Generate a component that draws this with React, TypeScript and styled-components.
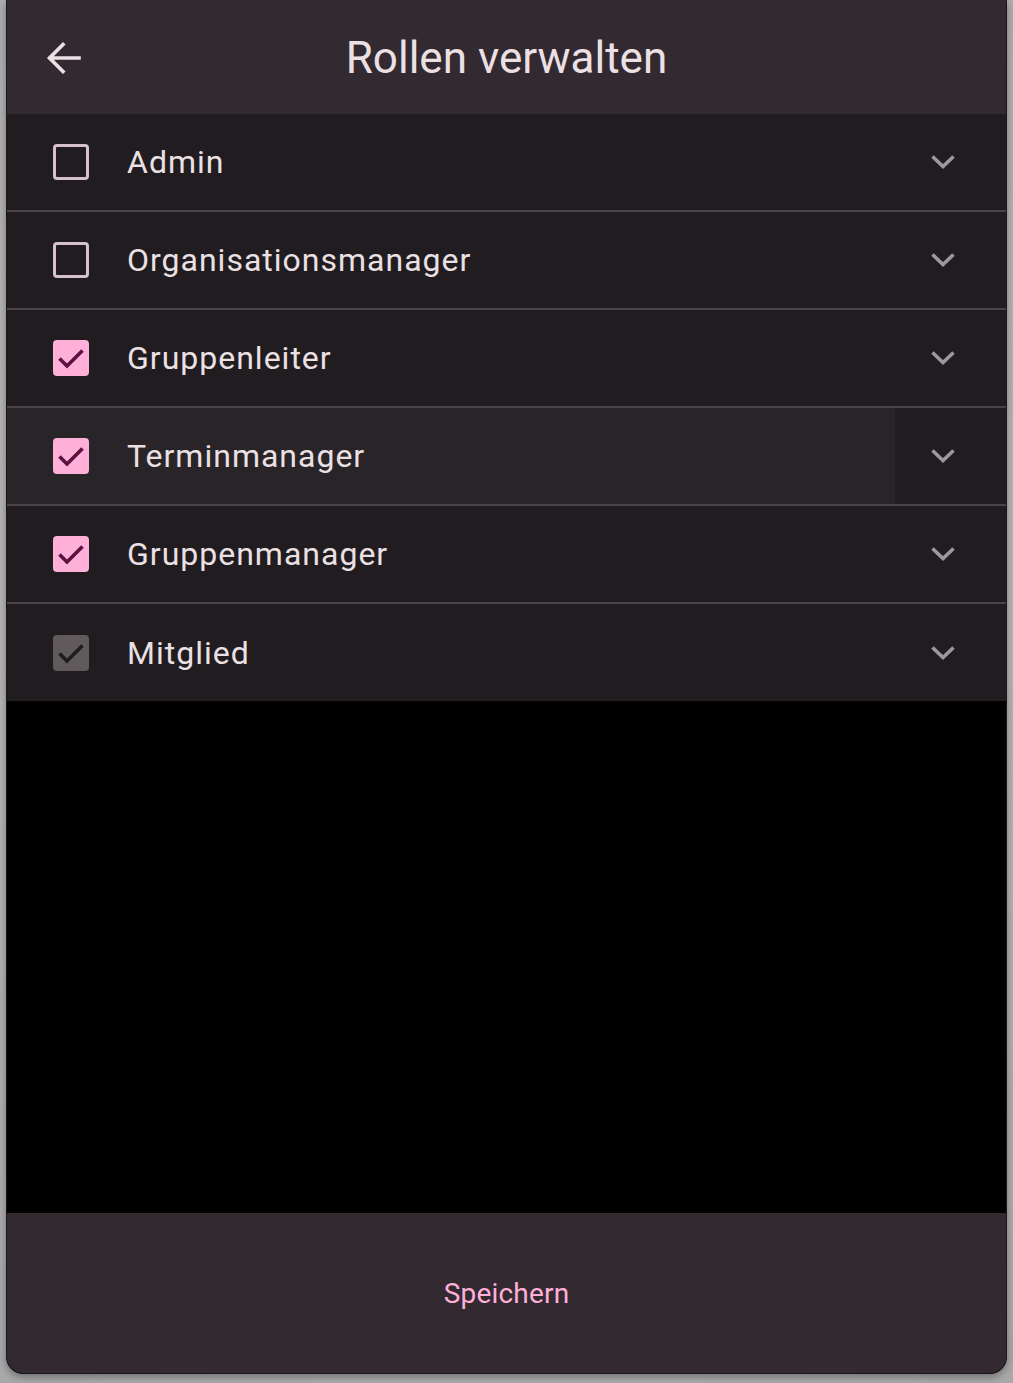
import React, {FC, useState} from 'react';
import styled, {createGlobalStyle} from 'styled-components';

const GlobalStyle = createGlobalStyle`
  html, body {
    margin: 0;
    padding: 0;
    background: radial-gradient(circle at 50% 40%, #c4c4c4, #a9a9a9);
    font-family: Roboto, "Noto Sans", sans-serif;
  }
`

type Role = {
    id: number
    name: string
    checked: boolean
    locked?: boolean
}

const roles: Role[] = [
    {id: 1, name: 'Admin', checked: false},
    {id: 2, name: 'Organisationsmanager', checked: false},
    {id: 3, name: 'Gruppenleiter', checked: true},
    {id: 4, name: 'Terminmanager', checked: true},
    {id: 5, name: 'Gruppenmanager', checked: true},
    {id: 6, name: 'Mitglied', checked: true, locked: true},
]

const Page = styled.div`
  padding: 0 6px 9px 6px;
`

const Window = styled.div`
  height: 1372px;
  display: flex;
  flex-direction: column;
  background: #000;
  border: 1px solid #1b1719;
  border-top: 1px solid #2f3131;
  border-radius: 0 0 17px 17px;
  overflow: hidden;
  box-shadow: 0 3px 8px rgba(0, 0, 0, 0.35);
`

const Header = styled.header`
  height: 113px;
  flex-shrink: 0;
  display: grid;
  grid-template-columns: 112px 1fr 112px;
  align-items: center;
  background: #322a30;
`

const BackButton = styled.button`
  width: 56px;
  height: 56px;
  margin-left: 29px;
  display: flex;
  align-items: center;
  justify-content: center;
  background: none;
  border: none;
  padding: 0;
  cursor: pointer;
`

const Title = styled.h1`
  margin: 0;
  text-align: center;
  color: #ece0e5;
  font-size: 44px;
  font-weight: 400;
  line-height: 1;
`

const List = styled.div`
  display: flex;
  flex-direction: column;
  background: #201c1f;
`

const Row = styled.div<{ $last?: boolean }>`
  height: ${p => p.$last ? '97px' : '96px'};
  display: flex;
  border-bottom: ${p => p.$last ? 'none' : '2px solid #4a4246'};
`

const RowMain = styled.label<{ $hover?: boolean }>`
  flex: 1;
  display: flex;
  align-items: center;
  padding-left: 46px;
  background: ${p => p.$hover ? '#282427' : 'transparent'};
  cursor: pointer;
`

const Box = styled.span<{ $checked: boolean, $locked?: boolean }>`
  width: 36px;
  height: 36px;
  box-sizing: border-box;
  border-radius: 4px;
  display: flex;
  align-items: center;
  justify-content: center;
  border: ${p => p.$checked ? 'none' : '3px solid #d6c2cb'};
  background: ${p => !p.$checked ? 'transparent' : p.$locked ? '#605a5d' : '#ffb0d9'};
`

const Label = styled.span`
  margin-left: 38px;
  color: #ebe0e4;
  font-size: 32px;
  letter-spacing: 1px;
`

const Expand = styled.button`
  width: 111px;
  display: flex;
  align-items: center;
  justify-content: center;
  background: none;
  border: none;
  padding: 0 16px 0 0;
  cursor: pointer;
`

const Empty = styled.div`
  flex: 1;
  background: #000;
`

const Footer = styled.footer`
  height: 160px;
  flex-shrink: 0;
  display: flex;
  align-items: center;
  justify-content: center;
  background: #322a30;
`

const SaveButton = styled.button`
  background: none;
  border: none;
  padding: 10px 20px;
  color: #ffb0d9;
  font-family: Roboto, sans-serif;
  font-size: 28px;
  letter-spacing: 0.2px;
  cursor: pointer;
`

const ArrowLeft: FC = () => (
    <svg width="36" height="36" viewBox="0 0 36 36" fill="none">
        <path d="M33 18H4M17 4.5L3.5 18L17 31.5" stroke="#ece0e5" strokeWidth="3.6" strokeLinecap="square"/>
    </svg>
)

const Chevron: FC = () => (
    <svg width="26" height="16" viewBox="0 0 26 16" fill="none">
        <path d="M2.5 2.5L13 12.5L23.5 2.5" stroke="#9d989b" strokeWidth="3.6"/>
    </svg>
)

const Check: FC<{ color: string }> = ({color}) => (
    <svg width="36" height="36" viewBox="0 0 36 36" fill="none">
        <path d="M6.5 18.5L14 26L29.5 10.5" stroke={color} strokeWidth="3.6"/>
    </svg>
)

const App: FC = () => {
    const [list, setList] = useState(roles)

    const toggle = (id: number) => {
        setList(list.map(r => r.id === id && !r.locked ? {...r, checked: !r.checked} : r))
    }

    return (
        <Page>
            <GlobalStyle/>
            <Window>
                <Header>
                    <BackButton aria-label="Zurück"><ArrowLeft/></BackButton>
                    <Title>Rollen verwalten</Title>
                    <div/>
                </Header>
                <List>
                    {list.map((r, i) =>
                        <Row key={r.id} $last={i === list.length - 1}>
                            <RowMain $hover={r.name === 'Terminmanager'} onClick={() => toggle(r.id)}>
                                <Box $checked={r.checked} $locked={r.locked}>
                                    {r.checked && <Check color={r.locked ? '#1f1b1e' : '#5d1140'}/>}
                                </Box>
                                <Label>{r.name}</Label>
                            </RowMain>
                            <Expand aria-label="Aufklappen"><Chevron/></Expand>
                        </Row>
                    )}
                </List>
                <Empty/>
                <Footer>
                    <SaveButton>Speichern</SaveButton>
                </Footer>
            </Window>
        </Page>
    );
};

export default App;
